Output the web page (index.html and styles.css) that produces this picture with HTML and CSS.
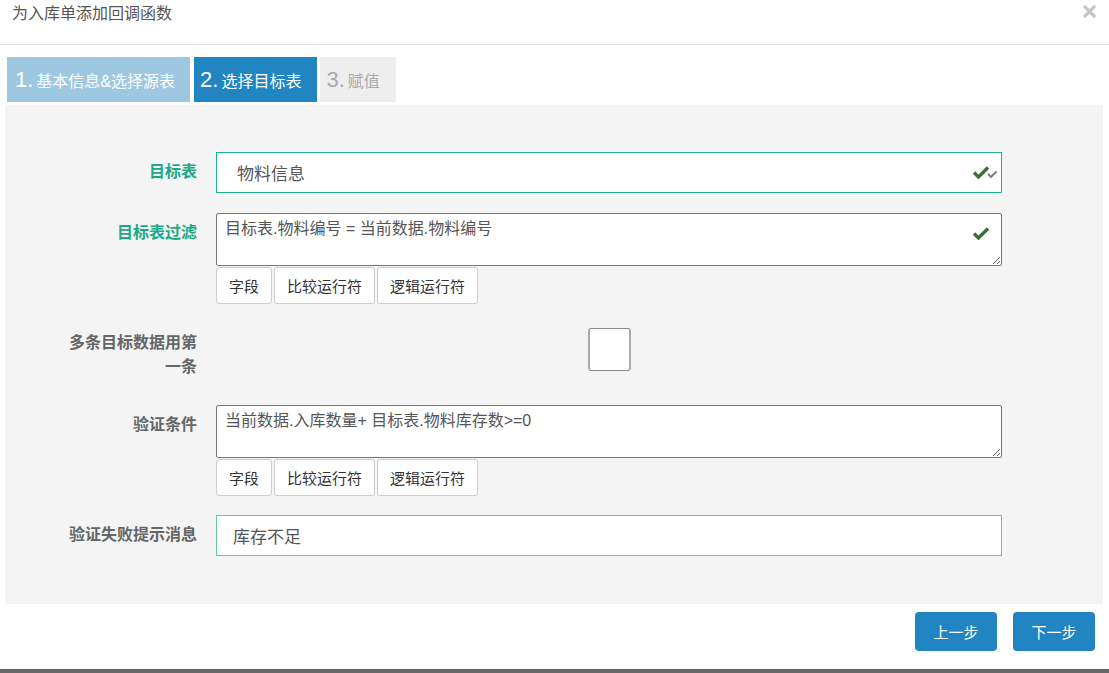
FILE: index.html
```html
<!DOCTYPE html>
<html lang="zh-CN">

<head>
    <meta charset="UTF-8">
    <meta name="viewport" content="width=device-width, initial-scale=1.0">
    <title>为入库单添加回调函数</title>
    <link rel="stylesheet" href="styles.css">
</head>

<body>
    <div class="modal">
        <header class="modal-header">
            <h4 class="modal-title">为入库单添加回调函数</h4>
            <button class="close" aria-label="close">
                <svg width="13" height="13" viewBox="0 0 13 13">
                    <path d="M2 2 L11 11 M11 2 L2 11" stroke="#c6c6c6" stroke-width="3.2" stroke-linecap="square" />
                </svg>
            </button>
        </header>

        <nav class="steps">
            <div class="step done"><span class="num">1.</span> 基本信息&amp;选择源表</div>
            <div class="step current"><span class="num">2.</span> 选择目标表</div>
            <div class="step todo"><span class="num">3.</span> 赋值</div>
        </nav>

        <section class="panel">
            <!-- 目标表 -->
            <div class="field ok">
                <label class="field-label">目标表</label>
                <div class="control">
                    <div class="input-box success">
                        <input type="text" class="input" value="物料信息">
                        <span class="feedback">
                            <svg width="26" height="14" viewBox="0 0 26 14">
                                <path d="M2 7.5 L6.5 12 L16 2.5" fill="none" stroke="#3b6f35" stroke-width="3.4" />
                                <path d="M16 9 L19 12 L24.5 6.5" fill="none" stroke="#777" stroke-width="1.8" />
                            </svg>
                        </span>
                    </div>
                </div>
            </div>

            <!-- 目标表过滤 -->
            <div class="field ok gap-20">
                <label class="field-label">目标表过滤</label>
                <div class="control">
                    <div class="input-box">
                        <textarea class="textarea">目标表.物料编号 = 当前数据.物料编号</textarea>
                        <span class="feedback area">
                            <svg width="18" height="14" viewBox="0 0 18 14">
                                <path d="M2 7.5 L6.5 12 L16 2.5" fill="none" stroke="#3b6f35" stroke-width="3.4" />
                            </svg>
                        </span>
                    </div>
                    <div class="btn-group">
                        <button class="btn">字段</button>
                        <button class="btn">比较运行符</button>
                        <button class="btn">逻辑运行符</button>
                    </div>
                </div>
            </div>

            <!-- 多条目标数据用第一条 -->
            <div class="field gap-24">
                <label class="field-label two-line">多条目标数据用第一条</label>
                <div class="control center">
                    <input type="checkbox" class="check">
                </div>
            </div>

            <!-- 验证条件 -->
            <div class="field gap-26">
                <label class="field-label">验证条件</label>
                <div class="control">
                    <textarea class="textarea">当前数据.入库数量+ 目标表.物料库存数>=0</textarea>
                    <div class="btn-group">
                        <button class="btn">字段</button>
                        <button class="btn">比较运行符</button>
                        <button class="btn">逻辑运行符</button>
                    </div>
                </div>
            </div>

            <!-- 验证失败提示消息 -->
            <div class="field gap-19">
                <label class="field-label">验证失败提示消息</label>
                <div class="control">
                    <input type="text" class="input light" value="库存不足">
                </div>
            </div>
        </section>

        <footer class="modal-footer">
            <button class="btn-primary">上一步</button>
            <button class="btn-primary">下一步</button>
        </footer>
        <div class="bottom-bar"></div>
    </div>
</body>

</html>
```

FILE: styles.css
```css
:root {
    --blue: #2185c1;
    --teal: #1ab394;
    --label-grey: #666;
}

body {
    margin: 0;
    padding: 0;
    background: #fff;
    font-family: "Liberation Sans", "Noto Sans CJK SC", sans-serif;
    color: #555;
}

.modal {
    width: 1109px;
}

.modal-header {
    height: 44px;
    border-bottom: 1px solid #e5e5e5;
    display: flex;
    justify-content: space-between;
    align-items: flex-start;
}

.modal-title {
    margin: 0;
    padding: 4px 12px 0;
    font-size: 16px;
    line-height: 20px;
    font-weight: normal;
    color: #555;
}

.close {
    margin: 5px 13px 0 0;
    padding: 0;
    border: none;
    background: none;
    line-height: 0;
}

/* steps */
.steps {
    display: flex;
    margin-top: 12px;
    padding-left: 7px;
}

.step {
    height: 45px;
    display: flex;
    align-items: center;
    padding: 0 16px 0 6px;
    font-size: 16px;
    color: #fff;
    white-space: nowrap;
}

.step .num {
    font-size: 22px;
    margin-right: 3px;
}

.step.done {
    background: #9ec8e2;
    padding: 0 15px 0 8px;
    margin-right: 4px;
}

.step.current {
    background: var(--blue);
    margin-right: 3px;
}

.step.todo {
    background: #eee;
    color: #aaa;
}

/* panel */
.panel {
    margin: 3px 6px 0 5px;
    padding: 47px 0 48px;
    background: #f4f4f4;
}

.field {
    display: grid;
    grid-template-columns: 192px 786px;
    column-gap: 19px;
    align-items: start;
}

.gap-19 { margin-top: 19px; }
.gap-20 { margin-top: 20px; }
.gap-24 { margin-top: 24px; }
.gap-26 { margin-top: 26px; }

.field-label {
    padding: 8px 0 0 52px;
    text-align: right;
    font-size: 16px;
    line-height: 24px;
    font-weight: bold;
    color: var(--label-grey);
}

.field.ok .field-label {
    color: #1aa98a;
}

.field-label.two-line {
    padding-top: 3px;
}

.control {
    display: flex;
    flex-direction: column;
}

.control.center {
    align-items: center;
}

.input-box {
    position: relative;
}

.input {
    box-sizing: border-box;
    width: 100%;
    height: 41px;
    margin: 0;
    padding: 0 16px;
    border: 1px solid var(--teal);
    background: #fff;
    font-family: inherit;
    font-size: 17px;
    color: #555;
    outline: none;
}

.input-box.success .input {
    padding-left: 20px;
}

.input.light {
    border-color: #66c3ae;
}

.textarea {
    box-sizing: border-box;
    display: block;
    width: 100%;
    height: 53px;
    margin: 0;
    padding: 5px 8px;
    border: 1px solid #767676;
    border-radius: 2px;
    background: #fff;
    font-family: inherit;
    font-size: 16px;
    line-height: 20px;
    color: #555;
    resize: vertical;
    outline: none;
}

.feedback {
    position: absolute;
    right: 4px;
    top: 13px;
    line-height: 0;
}

.feedback.area {
    right: 12px;
    top: 13px;
}

.btn-group {
    display: flex;
    gap: 2px;
    margin-top: 1px;
}

.btn {
    height: 37px;
    padding: 0 12px;
    border: 1px solid #ccc;
    border-radius: 3px;
    background: #fff;
    font-family: inherit;
    font-size: 15px;
    color: #333;
}

.check {
    appearance: none;
    -webkit-appearance: none;
    box-sizing: border-box;
    width: 43px;
    height: 43px;
    margin: 0;
    border: 1px solid #8a8a8a;
    border-left: 2px solid #aaa;
    border-right: 2px solid #aaa;
    border-radius: 3px;
    background: #fff;
}

/* footer */
.modal-footer {
    height: 57px;
    padding: 8px 14px 0 0;
    display: flex;
    justify-content: flex-end;
    gap: 16px;
}

.btn-primary {
    width: 82px;
    height: 39px;
    border: none;
    border-radius: 4px;
    background: var(--blue);
    color: #fff;
    font-family: inherit;
    font-size: 15px;
}

.bottom-bar {
    height: 4px;
    background: #666;
}
```
